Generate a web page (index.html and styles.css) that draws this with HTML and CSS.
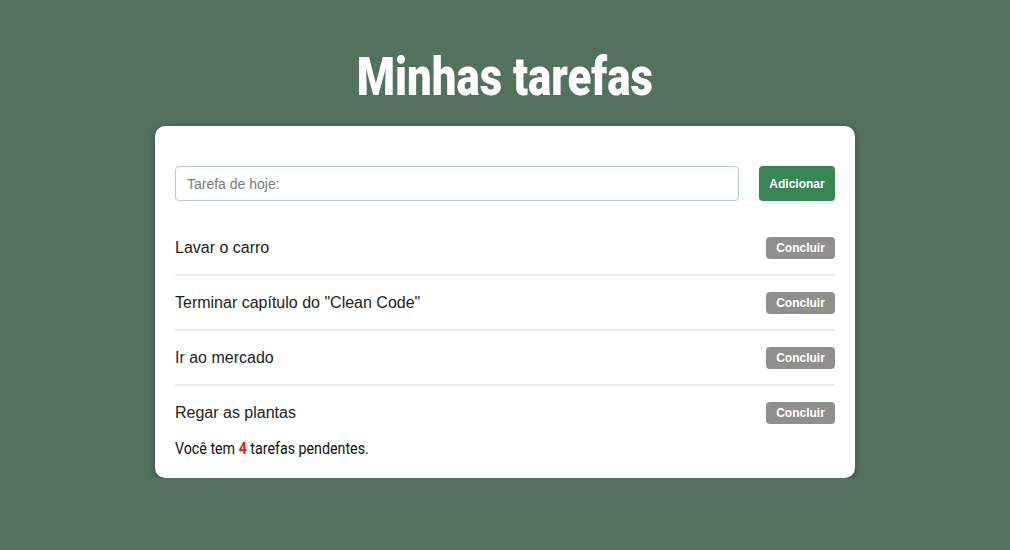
FILE: index.html
```html
<!DOCTYPE html>
<html lang="pt-BR">
<head>
<meta charset="utf-8">
<title>Minhas tarefas</title>
<link rel="stylesheet" href="styles.css">
</head>
<body>
<main class="app">
  <h1 class="title"><span class="title-text">Minhas tarefas</span></h1>
  <section class="card">
    <form class="add-form">
      <input class="task-input" type="text" placeholder="Tarefa de hoje:">
      <button class="btn btn-add" type="button">Adicionar</button>
    </form>
    <ul class="task-list">
      <li class="task"><span class="task-name">Lavar o carro</span><button class="btn btn-done" type="button">Concluir</button></li>
      <li class="task"><span class="task-name">Terminar capítulo do "Clean Code"</span><button class="btn btn-done" type="button">Concluir</button></li>
      <li class="task"><span class="task-name">Ir ao mercado</span><button class="btn btn-done" type="button">Concluir</button></li>
      <li class="task"><span class="task-name">Regar as plantas</span><button class="btn btn-done" type="button">Concluir</button></li>
    </ul>
    <p class="summary"><span class="summary-text">Você tem <strong class="count">4</strong> tarefas pendentes.</span></p>
  </section>
</main>
</body>
</html>
```
FILE: styles.css
```css
html, body {
  margin: 0;
  padding: 0;
}
body {
  background: #52725e;
  font-family: "Liberation Sans", Arial, sans-serif;
  color: #222;
}
.app {
  display: flex;
  flex-direction: column;
  align-items: center;
  padding-top: 47px;
}
.title {
  margin: 0 0 19px;
  font-family: Roboto, sans-serif;
  font-weight: 900;
  font-size: 54px;
  line-height: 60px;
  color: #fff;
  text-align: center;
}
.title-text {
  display: inline-block;
  transform: scaleX(0.81);
}
.card {
  width: 700px;
  box-sizing: border-box;
  background: #fff;
  border-radius: 10px;
  box-shadow: 0 2px 6px rgba(0, 0, 0, 0.35);
  padding: 40px 20px 20px;
}
.add-form {
  display: flex;
  gap: 20px;
  margin: 0 0 20px;
}
.task-input {
  flex: 1;
  height: 35px;
  box-sizing: border-box;
  border: 1px solid #a8d4b4;
  border-radius: 4px;
  padding: 0 11px;
  font-family: "Liberation Sans", Arial, sans-serif;
  font-size: 14px;
  color: #222;
  outline: none;
}
.task-input::placeholder {
  color: #7a7a7a;
}
.btn {
  border: none;
  border-radius: 4px;
  color: #fff;
  font-family: "Liberation Sans", Arial, sans-serif;
  font-weight: 700;
  font-size: 12px;
  cursor: pointer;
}
.btn-add {
  width: 76px;
  height: 35px;
  background: #398655;
}
.btn-done {
  width: 69px;
  height: 22px;
  padding: 0;
  background: #8f8f8f;
}
.task-list {
  list-style: none;
  margin: 0;
  padding: 0;
}
.task {
  display: flex;
  align-items: center;
  justify-content: space-between;
  height: 23px;
  padding: 15px 0;
  border-bottom: 2px solid #ebebeb;
  font-size: 16px;
}
.task:last-child {
  border-bottom: none;
}
.summary {
  margin: 0;
  font-family: Roboto, sans-serif;
  font-size: 16px;
  line-height: 19px;
  color: #111;
}
.summary-text {
  display: inline-block;
  transform: scaleX(0.89);
  transform-origin: left center;
  white-space: nowrap;
}
.count {
  color: #e8130f;
}
```
